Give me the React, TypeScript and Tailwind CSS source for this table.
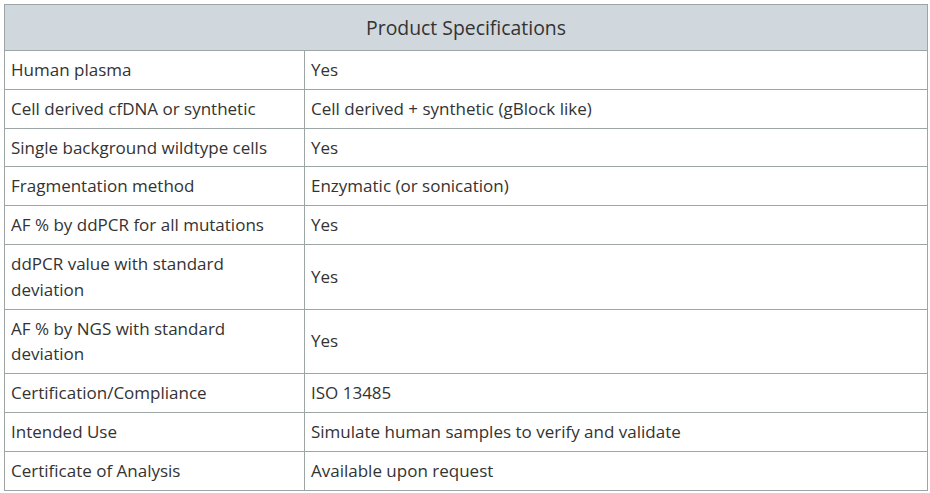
import React from "react";

const rows: [string, string][] = [
  ["Human plasma", "Yes"],
  ["Cell derived cfDNA or synthetic", "Cell derived + synthetic (gBlock like)"],
  ["Single background wildtype cells", "Yes"],
  ["Fragmentation method", "Enzymatic (or sonication)"],
  ["AF % by ddPCR for all mutations", "Yes"],
  ["ddPCR value with standard deviation", "Yes"],
  ["AF % by NGS with standard deviation", "Yes"],
  ["Certification/Compliance", "ISO 13485"],
  ["Intended Use", "Simulate human samples to verify and validate"],
  ["Certificate of Analysis", "Available upon request"],
];

const App = () => {
  return (
    <div className="bg-white p-[4px] font-['Open_Sans',sans-serif] text-[#333]">
      <table className="w-[924px] table-fixed border-collapse border border-[#9ea5a5]">
        <colgroup>
          <col className="w-[300px]" />
          <col />
        </colgroup>
        <thead>
          <tr>
            <th
              colSpan={2}
              className="h-[46px] border border-[#9ea5a5] bg-[#d0d7dd] text-center text-[19.4px] font-normal"
            >
              Product Specifications
            </th>
          </tr>
        </thead>
        <tbody>
          {rows.map(([k, v]) => (
            <tr key={k}>
              <td className="border border-[#9ea5a5] py-[6px] pl-[6px] pr-[20px] align-middle text-[17px] leading-[25.8px]">
                {k}
              </td>
              <td className="border border-[#9ea5a5] px-[6px] py-[6px] align-middle text-[17px] leading-[25.8px]">
                {v}
              </td>
            </tr>
          ))}
        </tbody>
      </table>
    </div>
  );
};

export default App;
